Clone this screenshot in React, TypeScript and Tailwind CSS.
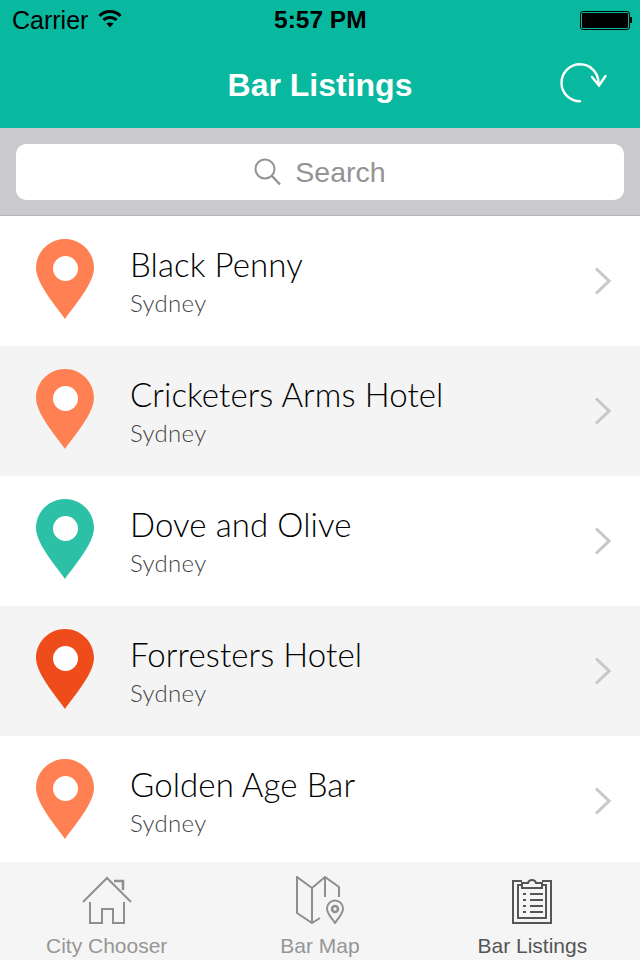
import React from 'react';

const ORANGE = '#ff8053';
const TEAL = '#2cc1a6';
const RED = '#ee4d1b';

const bars = [
  { name: 'Black Penny', color: ORANGE },
  { name: 'Cricketers Arms Hotel', color: ORANGE },
  { name: 'Dove and Olive', color: TEAL },
  { name: 'Forresters Hotel', color: RED },
  { name: 'Golden Age Bar', color: ORANGE },
];

const Pin = ({ color }: { color: string }) => (
  <svg width="58" height="80" viewBox="0 0 58 80" className="shrink-0 -mt-1">
    <path
      d="M29 80C25 73 0 46 0 29C0 13 13 0 29 0C45 0 58 13 58 29C58 46 33 73 29 80Z"
      fill={color}
    />
    <circle cx="29.5" cy="29.5" r="12.5" fill="#fff" />
  </svg>
);

const StatusBar = () => (
  <div className="h-10 flex items-center justify-between pl-3 pr-2 relative text-black text-[25px] font-['Liberation_Sans',sans-serif]">
    <div className="flex items-center gap-[10px] mt-0.5">
      <span>Carrier</span>
      <svg width="24" height="20" viewBox="0 0 24 20" className="-mt-1.5">
        <path d="M1.500 8C7 2 17 2 22.500 8" fill="none" stroke="#000" strokeWidth="3" />
        <path d="M5.500 12C9 8.500 15 8.500 18.500 12" fill="none" stroke="#000" strokeWidth="3" />
        <path d="M8.500 15.500C10.500 14 13.500 14 15.500 15.500L12 19.500Z" fill="#000" />
      </svg>
    </div>
    <span className="absolute left-[274px] font-bold text-[24.5px]">5:57 PM</span>
    <div className="flex items-center">
      <div className="w-[50px] h-[19px] rounded-[3px] border border-black p-px">
        <div className="w-full h-full bg-black rounded-[1px]" />
      </div>
      <div className="w-0.5 h-1.5 bg-black" />
    </div>
  </div>
);

const NavBar = () => (
  <div className="h-[88px] flex items-center justify-center relative">
    <h1 className="text-white text-[32px] font-bold font-['Liberation_Sans',sans-serif] mt-[2px]">Bar Listings</h1>
    <svg width="50" height="42" viewBox="0 0 50 42" className="absolute left-[558px] top-[22px]">
      <path
        d="M22 39.300A18.500 18.500 0 1 1 40.500 21"
        fill="none"
        stroke="#fff"
        strokeWidth="2.400"
        strokeLinecap="round"
      />
      <path d="M34 15L41 23.500L47.500 14" fill="none" stroke="#fff" strokeWidth="2.400" strokeLinecap="round" />
    </svg>
  </div>
);

const SearchBar = () => (
  <div className="h-[88px] bg-[#c9c9ce] border-b border-[#b4b4b8] px-4 pt-4">
    <div className="h-14 bg-white rounded-[10px] flex items-center justify-center gap-[13px]">
      <svg width="28" height="28" viewBox="0 0 28 28">
        <circle cx="11" cy="11" r="9.500" fill="none" stroke="#939396" strokeWidth="2" />
        <path d="M18 18L26 26.500" stroke="#939396" strokeWidth="2.400" />
      </svg>
      <span className="text-[#939396] text-[28.500px] font-['Liberation_Sans',sans-serif]">Search</span>
    </div>
  </div>
);

const BarRow = ({ name, color, shaded }: { name: string; color: string; shaded: boolean }) => (
  <div className={`h-[130px] shrink-0 flex items-center pl-9 pr-[29px] ${shaded ? 'bg-[#f4f4f4]' : 'bg-white'}`}>
    <Pin color={color} />
    <div className="flex-1 ml-9 font-['Lato',sans-serif] font-light">
      <div className="text-black text-[33px] leading-[40px] tracking-[0.1px]">{name}</div>
      <div className="text-[#444] text-[24px] leading-[32px] mt-[3px] tracking-[0.3px]">Sydney</div>
    </div>
    <svg width="17" height="28" viewBox="0 0 17 28" fill="none" stroke="#c7c7cc" strokeWidth="3">
      <path d="M2 1.500L15 14L2 26.500" />
    </svg>
  </div>
);

const TabBar = () => (
  <div className="h-[98px] bg-[#f5f5f5] grid grid-cols-3 font-['Liberation_Sans',sans-serif] text-[21px]">
    <div className="flex flex-col items-center pt-[14px] text-[#969696]">
      <svg width="50" height="48" viewBox="0 0 50 48" fill="none" stroke="#8f8f8f" strokeWidth="2">
        <path d="M1 26L25 2L49 26" />
        <path d="M32 5H41V14" strokeWidth="2.500" />
        <path d="M8 26V47H20V33H31V47H42V26" />
      </svg>
      <span className="mt-[10px] leading-6">City Chooser</span>
    </div>
    <div className="flex flex-col items-center pt-[14px] text-[#969696]">
      <svg width="50" height="48" viewBox="0 0 50 48" fill="none" stroke="#8f8f8f" strokeWidth="2" className="ml-[3px]">
        <path d="M24 42L16 47L1 37V1L16 12L29 1L43 11V21" />
        <path d="M16 12V47" />
        <path d="M29 1V21" />
        <path d="M39 47C36 42 31 38 31 32.500A8 8 0 0 1 47 32.500C47 38 42 42 39 47Z" />
        <circle cx="39" cy="33" r="3" strokeWidth="2.500" />
      </svg>
      <span className="mt-[10px] leading-6">Bar Map</span>
    </div>
    <div className="flex flex-col items-center pt-[14px] text-[#555]">
      <svg width="40" height="48" viewBox="0 0 40 48" fill="none" stroke="#555" strokeWidth="2" className="-ml-[3px]">
        <path d="M10 5H1V47H39V5H30" />
        <path d="M10 9H6V42H34V9H30" />
        <path d="M10 12V7H16C17 3 23 3 24 7H30V12Z" />
        <path d="M11 18H14M18 18H31M11 24H14M18 24H31M11 30H14M18 30H31M11 36H14M18 36H31" />
      </svg>
      <span className="mt-[10px] leading-6 -ml-[2px]">Bar Listings</span>
    </div>
  </div>
);

export default function App() {
  return (
    <div className="w-[640px] h-[960px] flex flex-col overflow-hidden bg-white">
      <div className="bg-[#08b9a0] h-32 shrink-0">
        <StatusBar />
        <NavBar />
      </div>
      <SearchBar />
      <div className="flex-1 min-h-0 overflow-hidden flex flex-col">
        {bars.map((bar, idx) => (
          <BarRow key={bar.name} name={bar.name} color={bar.color} shaded={idx % 2 === 1} />
        ))}
      </div>
      <TabBar />
    </div>
  );
}
